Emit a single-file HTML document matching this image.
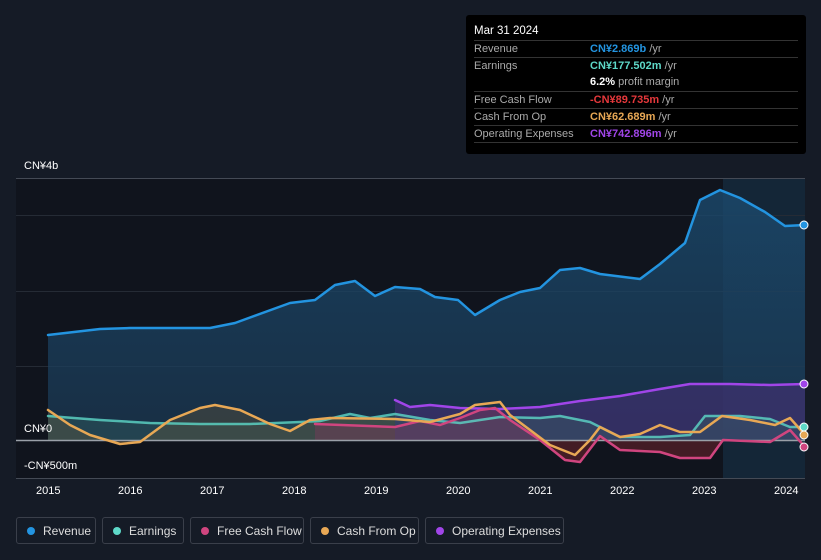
<!DOCTYPE html>
<html><head><meta charset="utf-8"><style>
body{margin:0;width:821px;height:560px;background:#151b26;font-family:"Liberation Sans","Noto Sans CJK SC",sans-serif;overflow:hidden;position:relative}
.tip{position:absolute;left:466px;top:15px;width:340px;height:139px;background:#000;border-radius:3px;color:#fff;font-size:11px}
.tip .h{position:absolute;left:8px;top:10px;font-size:11.5px}
.row{position:absolute;left:8px;width:324px;height:17px;border-top:1px solid #333;}
.row .l{position:absolute;left:0;top:2px;color:#aaa}
.row .v{position:absolute;left:116px;top:2px;font-weight:bold}
.row .v span{color:#aaa;font-weight:normal}
.leg{position:absolute;top:517px;height:27px;border:1px solid #3a3f4a;border-radius:3px;color:#ddd;font-size:12px;line-height:27px;box-sizing:border-box}
.leg i{display:inline-block;width:8px;height:8px;border-radius:50%;margin:0 8px 0 10px;vertical-align:0px}
.ax{position:absolute;color:#fff;font-size:11px}
</style></head><body>
<svg width="821" height="560" style="position:absolute;left:0;top:0">
<defs>
<linearGradient id="g" x1="0" y1="0" x2="0" y2="1"><stop offset="0" stop-color="#1b4a6e" stop-opacity=".8"/><stop offset="1" stop-color="#1b3a55" stop-opacity=".7"/></linearGradient>
</defs>
<rect x="16" y="178" width="789" height="300" fill="#10141d"/>
<rect x="723" y="178" width="82" height="300" fill="#17324a" opacity=".6"/>
<line x1="16" y1="178.5" x2="805" y2="178.5" stroke="#444a55"/>
<line x1="16" y1="215.5" x2="805" y2="215.5" stroke="#252b35"/>
<line x1="16" y1="291.5" x2="805" y2="291.5" stroke="#252b35"/>
<line x1="16" y1="366.5" x2="805" y2="366.5" stroke="#252b35"/>
<line x1="16" y1="478.5" x2="805" y2="478.5" stroke="#444a55"/>
<path d="M48,335 L100,329 130,328 210,328 235,323 290,303 315,300 335,285 355,281 375,296 395,287 420,289 435,297 458,300 475,315 500,300 520,292 540,288 560,270 580,268 600,274 640,279 660,264 685,243 700,200 720,190 740,198 765,212 785,226 805,225 L805,440 48,440Z" fill="url(#g)"/>
<path d="M395,400 L410,407 430,405 460,408 500,409 540,407 580,401 620,396 660,389 690,384 730,384 770,385 805,384 L805,440 395,440Z" fill="#4a2f7a" opacity=".55"/>
<path d="M48,416 L100,420 150,423 200,424 250,424 300,422 320,421 350,414 370,418 395,414 430,420 460,423 480,420 500,417 540,418 560,416 590,422 620,437 660,437 690,435 705,416 740,416 770,419 790,427 805,427 L805,440 48,440Z" fill="#3a6a66" opacity=".35"/>
<path d="M48,410 L70,425 90,435 120,444 140,442 170,420 200,408 215,405 240,410 270,424 290,431 310,420 330,418 395,419 L395,440 48,440Z" fill="#6a5a3a" opacity=".35"/>
<path d="M315,424 L395,427 420,421 440,425 460,418 480,410 495,408 510,420 540,440 L315,440Z" fill="#7a3a5a" opacity=".45"/>
<path d="M540,440 565,460 580,462 600,436 620,450 660,452 680,458 710,458 723,440Z" fill="#5a1f2a" opacity=".7"/>
<line x1="16" y1="440.5" x2="805" y2="440.5" stroke="#9aa0a8" stroke-width="1.5"/>
<g fill="none" stroke-width="2.5" stroke-linejoin="round" stroke-linecap="round">
<path d="M48,335 L100,329 130,328 210,328 235,323 290,303 315,300 335,285 355,281 375,296 395,287 420,289 435,297 458,300 475,315 500,300 520,292 540,288 560,270 580,268 600,274 640,279 660,264 685,243 700,200 720,190 740,198 765,212 785,226 805,225" stroke="#2394e0"/>
<path d="M395,400 L410,407 430,405 460,408 500,409 540,407 580,401 620,396 660,389 690,384 730,384 770,385 805,384" stroke="#a045e8"/>
<path d="M48,416 L100,420 150,423 200,424 250,424 300,422 320,421 350,414 370,418 395,414 430,420 460,423 480,420 500,417 540,418 560,416 590,422 620,437 660,437 690,435 705,416 740,416 770,419 790,427 805,427" stroke="#5ed8c8" opacity=".8"/>
<path d="M315,424 L395,427 420,421 440,425 460,418 480,410 495,408 510,420 540,440 565,460 580,462 600,436 620,450 660,452 680,458 710,458 723,440 770,442 790,430 805,447" stroke="#d0457f"/>
<path d="M48,410 L70,425 90,435 120,444 140,442 170,420 200,408 215,405 240,410 270,424 290,431 310,420 330,418 395,419 430,422 460,414 475,405 500,402 510,415 530,430 550,445 575,455 590,440 600,427 620,437 640,434 660,425 680,432 700,432 722,416 750,420 775,425 790,418 805,435" stroke="#e8a855"/>
</g>
<g stroke="#fff" stroke-width="1"><circle cx="804" cy="225" r="4" fill="#2394e0"/><circle cx="804" cy="384" r="4" fill="#a045e8"/><circle cx="804" cy="427" r="4" fill="#5ed8c8"/><circle cx="804" cy="435" r="4" fill="#e8a855"/><circle cx="804" cy="447" r="4" fill="#d0457f"/></g>
</svg>
<div class="ax" style="left:24px;top:160px">CN¥4b</div>
<div class="ax" style="left:24px;top:423px">CN¥0</div>
<div class="ax" style="left:24px;top:460px">-CN¥500m</div>
<div class="ax" style="left:36px;top:485px">2015</div>
<div class="ax" style="left:118px;top:485px">2016</div>
<div class="ax" style="left:200px;top:485px">2017</div>
<div class="ax" style="left:282px;top:485px">2018</div>
<div class="ax" style="left:364px;top:485px">2019</div>
<div class="ax" style="left:446px;top:485px">2020</div>
<div class="ax" style="left:528px;top:485px">2021</div>
<div class="ax" style="left:610px;top:485px">2022</div>
<div class="ax" style="left:692px;top:485px">2023</div>
<div class="ax" style="left:774px;top:485px">2024</div>
<div class="tip">
<div class="h">Mar 31 2024</div>
<div class="row" style="top:25px"><span class="l">Revenue</span><span class="v" style="color:#2394e0">CN¥2.869b <span>/yr</span></span></div>
<div class="row" style="top:42px"><span class="l">Earnings</span><span class="v" style="color:#5ed8c8">CN¥177.502m <span>/yr</span></span></div>
<div class="row" style="top:59px;border-top:none"><span class="v" style="color:#fff">6.2% <span>profit margin</span></span></div>
<div class="row" style="top:76px"><span class="l">Free Cash Flow</span><span class="v" style="color:#e5383b">-CN¥89.735m <span>/yr</span></span></div>
<div class="row" style="top:93px"><span class="l">Cash From Op</span><span class="v" style="color:#e8a855">CN¥62.689m <span>/yr</span></span></div>
<div class="row" style="top:110px"><span class="l">Operating Expenses</span><span class="v" style="color:#a045e8">CN¥742.896m <span>/yr</span></span></div>
<div class="row" style="top:127px;height:0"></div>
</div>
<div class="leg" style="left:16px;width:80px"><i style="background:#2394e0"></i>Revenue</div>
<div class="leg" style="left:102px;width:82px"><i style="background:#5ed8c8"></i>Earnings</div>
<div class="leg" style="left:190px;width:114px"><i style="background:#d0457f"></i>Free Cash Flow</div>
<div class="leg" style="left:310px;width:109px"><i style="background:#e8a855"></i>Cash From Op</div>
<div class="leg" style="left:425px;width:139px"><i style="background:#a045e8"></i>Operating Expenses</div>
</body></html>
